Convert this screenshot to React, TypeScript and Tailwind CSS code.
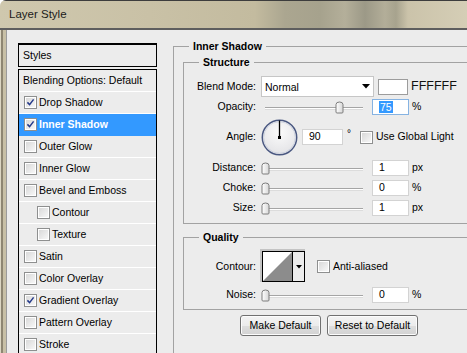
import type { ReactNode } from "react";

const effects = [
  { label: "Drop Shadow", checked: true },
  { label: "Inner Shadow", checked: true, selected: true },
  { label: "Outer Glow" },
  { label: "Inner Glow" },
  { label: "Bevel and Emboss" },
  { label: "Contour", indent: true },
  { label: "Texture", indent: true },
  { label: "Satin" },
  { label: "Color Overlay" },
  { label: "Gradient Overlay", checked: true },
  { label: "Pattern Overlay" },
  { label: "Stroke" },
];

function Check({ checked }: { checked?: boolean }) {
  return (
    <span className="w-[13px] h-[13px] shrink-0 border border-[#8e8f8f] bg-white p-[1px] flex">
      <span className="flex-1 bg-[linear-gradient(135deg,#d9d9d9,#f7f7f7)] flex items-center justify-center">
        {checked && (
          <svg width="9" height="9" viewBox="0 0 9 9">
            <path d="M1.4 4.4 L3.6 6.6 L7.6 1.4" fill="none" stroke="#24398a" strokeWidth="1.5" />
          </svg>
        )}
      </span>
    </span>
  );
}

function Slider({ pos }: { pos: number }) {
  return (
    <div className="relative w-[105px] h-[16px] shrink-0">
      <div className="absolute left-[4px] right-[3px] top-[8px] h-[3px] border-t border-[#a5a5a5] border-b border-b-[#dcdcdc] bg-white" />
      <svg className="absolute top-[2px]" style={{ left: pos }} width="9" height="13" viewBox="0 0 9 13">
        <defs>
          <linearGradient id="thumb" x1="0" x2="1">
            <stop offset="0" stopColor="#ffffff" />
            <stop offset="1" stopColor="#d6d6d6" />
          </linearGradient>
        </defs>
        <path d="M1 3.5 Q1 1 4.5 1 Q8 1 8 3.5 L8 11 Q8 12 7 12 L2 12 Q1 12 1 11 Z" fill="url(#thumb)" stroke="#7d7d7d" />
      </svg>
    </div>
  );
}

function Field({ value, focus, w = "w-[37px]" }: { value: string; focus?: boolean; w?: string }) {
  return (
    <div
      className={`${w} h-[16px] shrink-0 bg-white border flex items-center pl-[6px] ${
        focus ? "border-[#86b3e2] pl-[5px]" : "border-[#d3d3d3]"
      }`}
    >
      {focus ? <span className="bg-[#3399ff] text-white px-[1px] leading-[12px]">{value}</span> : value}
    </div>
  );
}

function Row({ label, h, mt, children }: { label: string; h: string; mt: string; children: ReactNode }) {
  return (
    <div className={`flex items-center ${h} ${mt}`}>
      <span className="w-[72px] text-right shrink-0">{label}</span>
      <div className="ml-[5px] flex items-center">{children}</div>
    </div>
  );
}

function Group({ title, className, children }: { title: string; className: string; children: ReactNode }) {
  return (
    <fieldset className={`border border-[#a2a2a2] shrink-0 ${className}`}>
      <legend className="ml-[15px] px-[4px] font-bold leading-[12px]">{title}</legend>
      {children}
    </fieldset>
  );
}

export default function App() {
  return (
    <div className="w-[467px] h-[353px] overflow-hidden flex flex-col bg-[#ececec] font-['Liberation_Sans',Arial,sans-serif] text-[10.5px] text-black rounded-tl-[6px]">
      {/* title bar */}
      <div className="h-[30px] shrink-0 flex items-center pl-[9px] border-t border-[#3d3d3d] border-b-2 border-b-[#5e5e5e] bg-[linear-gradient(90deg,#cfc8ae_0px,#c9c1a6_150px,#c3bb9f_255px,#aba690_285px,#a6a28d_320px,#b4af9a_345px,#9c9987_365px,#b3ae99_385px,#a7a38e_396px,#cbc3aa_408px,#d5ceb6_467px)]">
        <span className="text-[11.5px] text-[#1b1b1b]">Layer Style</span>
      </div>

      <div className="flex-1 flex min-h-0">
        {/* window frame */}
        <div className="w-[7px] shrink-0 border-r border-[#9b9b9b] bg-[linear-gradient(90deg,#ddd7c3_0px,#ddd7c3_1px,#8e8672_1px,#8e8672_3px,#c8c0a6_3px)]" />

        {/* styles list */}
        <div className="pl-[11px] pt-[13px] shrink-0">
          <div className="w-[139px] h-[24px] border border-black border-t-2 flex items-center pl-[4px]">Styles</div>
          <div className="w-[139px] mt-[2px] border-x border-t border-black">
            <div className="h-[22px] flex items-center pl-[4px] border-b border-white">Blending Options: Default</div>
            {effects.map((e) => (
              <div
                key={e.label}
                className={`h-[22px] flex items-center gap-[2px] border-b ${e.indent ? "pl-[18px]" : "pl-[5px]"} ${
                  e.selected ? "bg-[#3399ff] border-[#3399ff] text-white font-bold" : "border-white"
                }`}
              >
                <Check checked={e.checked} />
                <span>{e.label}</span>
              </div>
            ))}
          </div>
        </div>

        {/* settings */}
        <div className="pl-[16px] pt-[10px] shrink-0">
          <Group title="Inner Shadow" className="w-[320px] pb-[40px]">
            <Group title="Structure" className="ml-[9px] mt-[4px] w-[300px] pb-[7px]">
              <Row label="Blend Mode:" h="h-[21px]" mt="mt-[8px]">
                <div className="w-[113px] h-[21px] bg-white border border-[#c6c6c6] flex items-center pl-[3px] justify-between pr-[3px]">
                  <span className="pt-[2px]">Normal</span>
                  <svg width="8" height="5" viewBox="0 0 8 5">
                    <path d="M0 0 H8 L4 4.5 Z" fill="#000" />
                  </svg>
                </div>
                <div className="ml-[4px] w-[30px] h-[16px] bg-white border border-[#9c9c9c]" />
                <span className="ml-[3px] text-[12.5px] text-[#111]">FFFFFF</span>
              </Row>
              <Row label="Opacity:" h="h-[16px]" mt="mt-[2px]">
                <Slider pos={74} />
                <div className="ml-[6px]">
                  <Field value="75" focus />
                </div>
                <span className="ml-[3px]">%</span>
              </Row>
              <Row label="Angle:" h="h-[36px]" mt="mt-[4px]">
                <svg width="37" height="37" viewBox="0 0 37 37">
                  <defs>
                    <radialGradient id="dial" cx="50%" cy="35%" r="65%">
                      <stop offset="0" stopColor="#fbfbfb" />
                      <stop offset="1" stopColor="#e3e3e6" />
                    </radialGradient>
                  </defs>
                  <circle cx="18.5" cy="18.5" r="17.2" fill="url(#dial)" stroke="#4a5881" strokeWidth="1.5" />
                  <circle cx="18.5" cy="18.5" r="15.8" fill="none" stroke="#c9cfdd" strokeWidth="0.8" />
                  <line x1="18.5" y1="18.5" x2="18.5" y2="1.5" stroke="#000" strokeWidth="1.3" />
                  <rect x="17" y="17" width="3" height="3" fill="#000" />
                </svg>
                <div className="ml-[4px]">
                  <Field value="90" w="w-[41px]" />
                </div>
                <span className="ml-[4px] -mt-[8px] text-[10px]">°</span>
                <div className="ml-[9px] flex items-center gap-[3px]">
                  <Check />
                  <span>Use Global Light</span>
                </div>
              </Row>
              <Row label="Distance:" h="h-[16px]" mt="mt-[5px]">
                <Slider pos={0} />
                <div className="ml-[6px]">
                  <Field value="1" />
                </div>
                <span className="ml-[3px]">px</span>
              </Row>
              <Row label="Choke:" h="h-[16px]" mt="mt-[4px]">
                <Slider pos={0} />
                <div className="ml-[6px]">
                  <Field value="0" />
                </div>
                <span className="ml-[3px]">%</span>
              </Row>
              <Row label="Size:" h="h-[16px]" mt="mt-[4px]">
                <Slider pos={0} />
                <div className="ml-[6px]">
                  <Field value="1" />
                </div>
                <span className="ml-[3px]">px</span>
              </Row>
            </Group>

            <Group title="Quality" className="ml-[9px] mt-[7px] w-[300px] pb-[6px]">
              <Row label="Contour:" h="h-[31px]" mt="mt-[8px]">
                <div className="ml-[1px] border border-black shadow-[-1px_-1px_0_1px_#c4c4c4] flex h-[31px]">
                  <svg width="29" height="29" viewBox="0 0 29 29" className="bg-white">
                    <polygon points="0,29 29,0 29,29" fill="#8c8c8c" />
                  </svg>
                  <div className="w-[12px] border-l border-black bg-[#ececec] flex items-center justify-center">
                    <svg width="6" height="4" viewBox="0 0 6 4">
                      <path d="M0 0 H6 L3 3.5 Z" fill="#000" />
                    </svg>
                  </div>
                </div>
                <div className="ml-[12px] flex items-center gap-[3px]">
                  <Check />
                  <span>Anti-aliased</span>
                </div>
              </Row>
              <Row label="Noise:" h="h-[16px]" mt="mt-[5px]">
                <Slider pos={0} />
                <div className="ml-[6px]">
                  <Field value="0" />
                </div>
                <span className="ml-[3px]">%</span>
              </Row>
            </Group>

            <div className="ml-[66px] mt-[5px] flex gap-[6px]">
              <button className="w-[81px] h-[21px] rounded-[3px] border border-[#707070] shadow-[inset_0_0_0_1px_#fcfcfc] bg-[linear-gradient(#f3f3f3_0%,#ececec_50%,#dedede_51%,#d2d2d2_100%)]">
                Make Default
              </button>
              <button className="w-[91px] h-[21px] rounded-[3px] border border-[#707070] shadow-[inset_0_0_0_1px_#fcfcfc] bg-[linear-gradient(#f3f3f3_0%,#ececec_50%,#dedede_51%,#d2d2d2_100%)]">
                Reset to Default
              </button>
            </div>
          </Group>
        </div>
      </div>
    </div>
  );
}
